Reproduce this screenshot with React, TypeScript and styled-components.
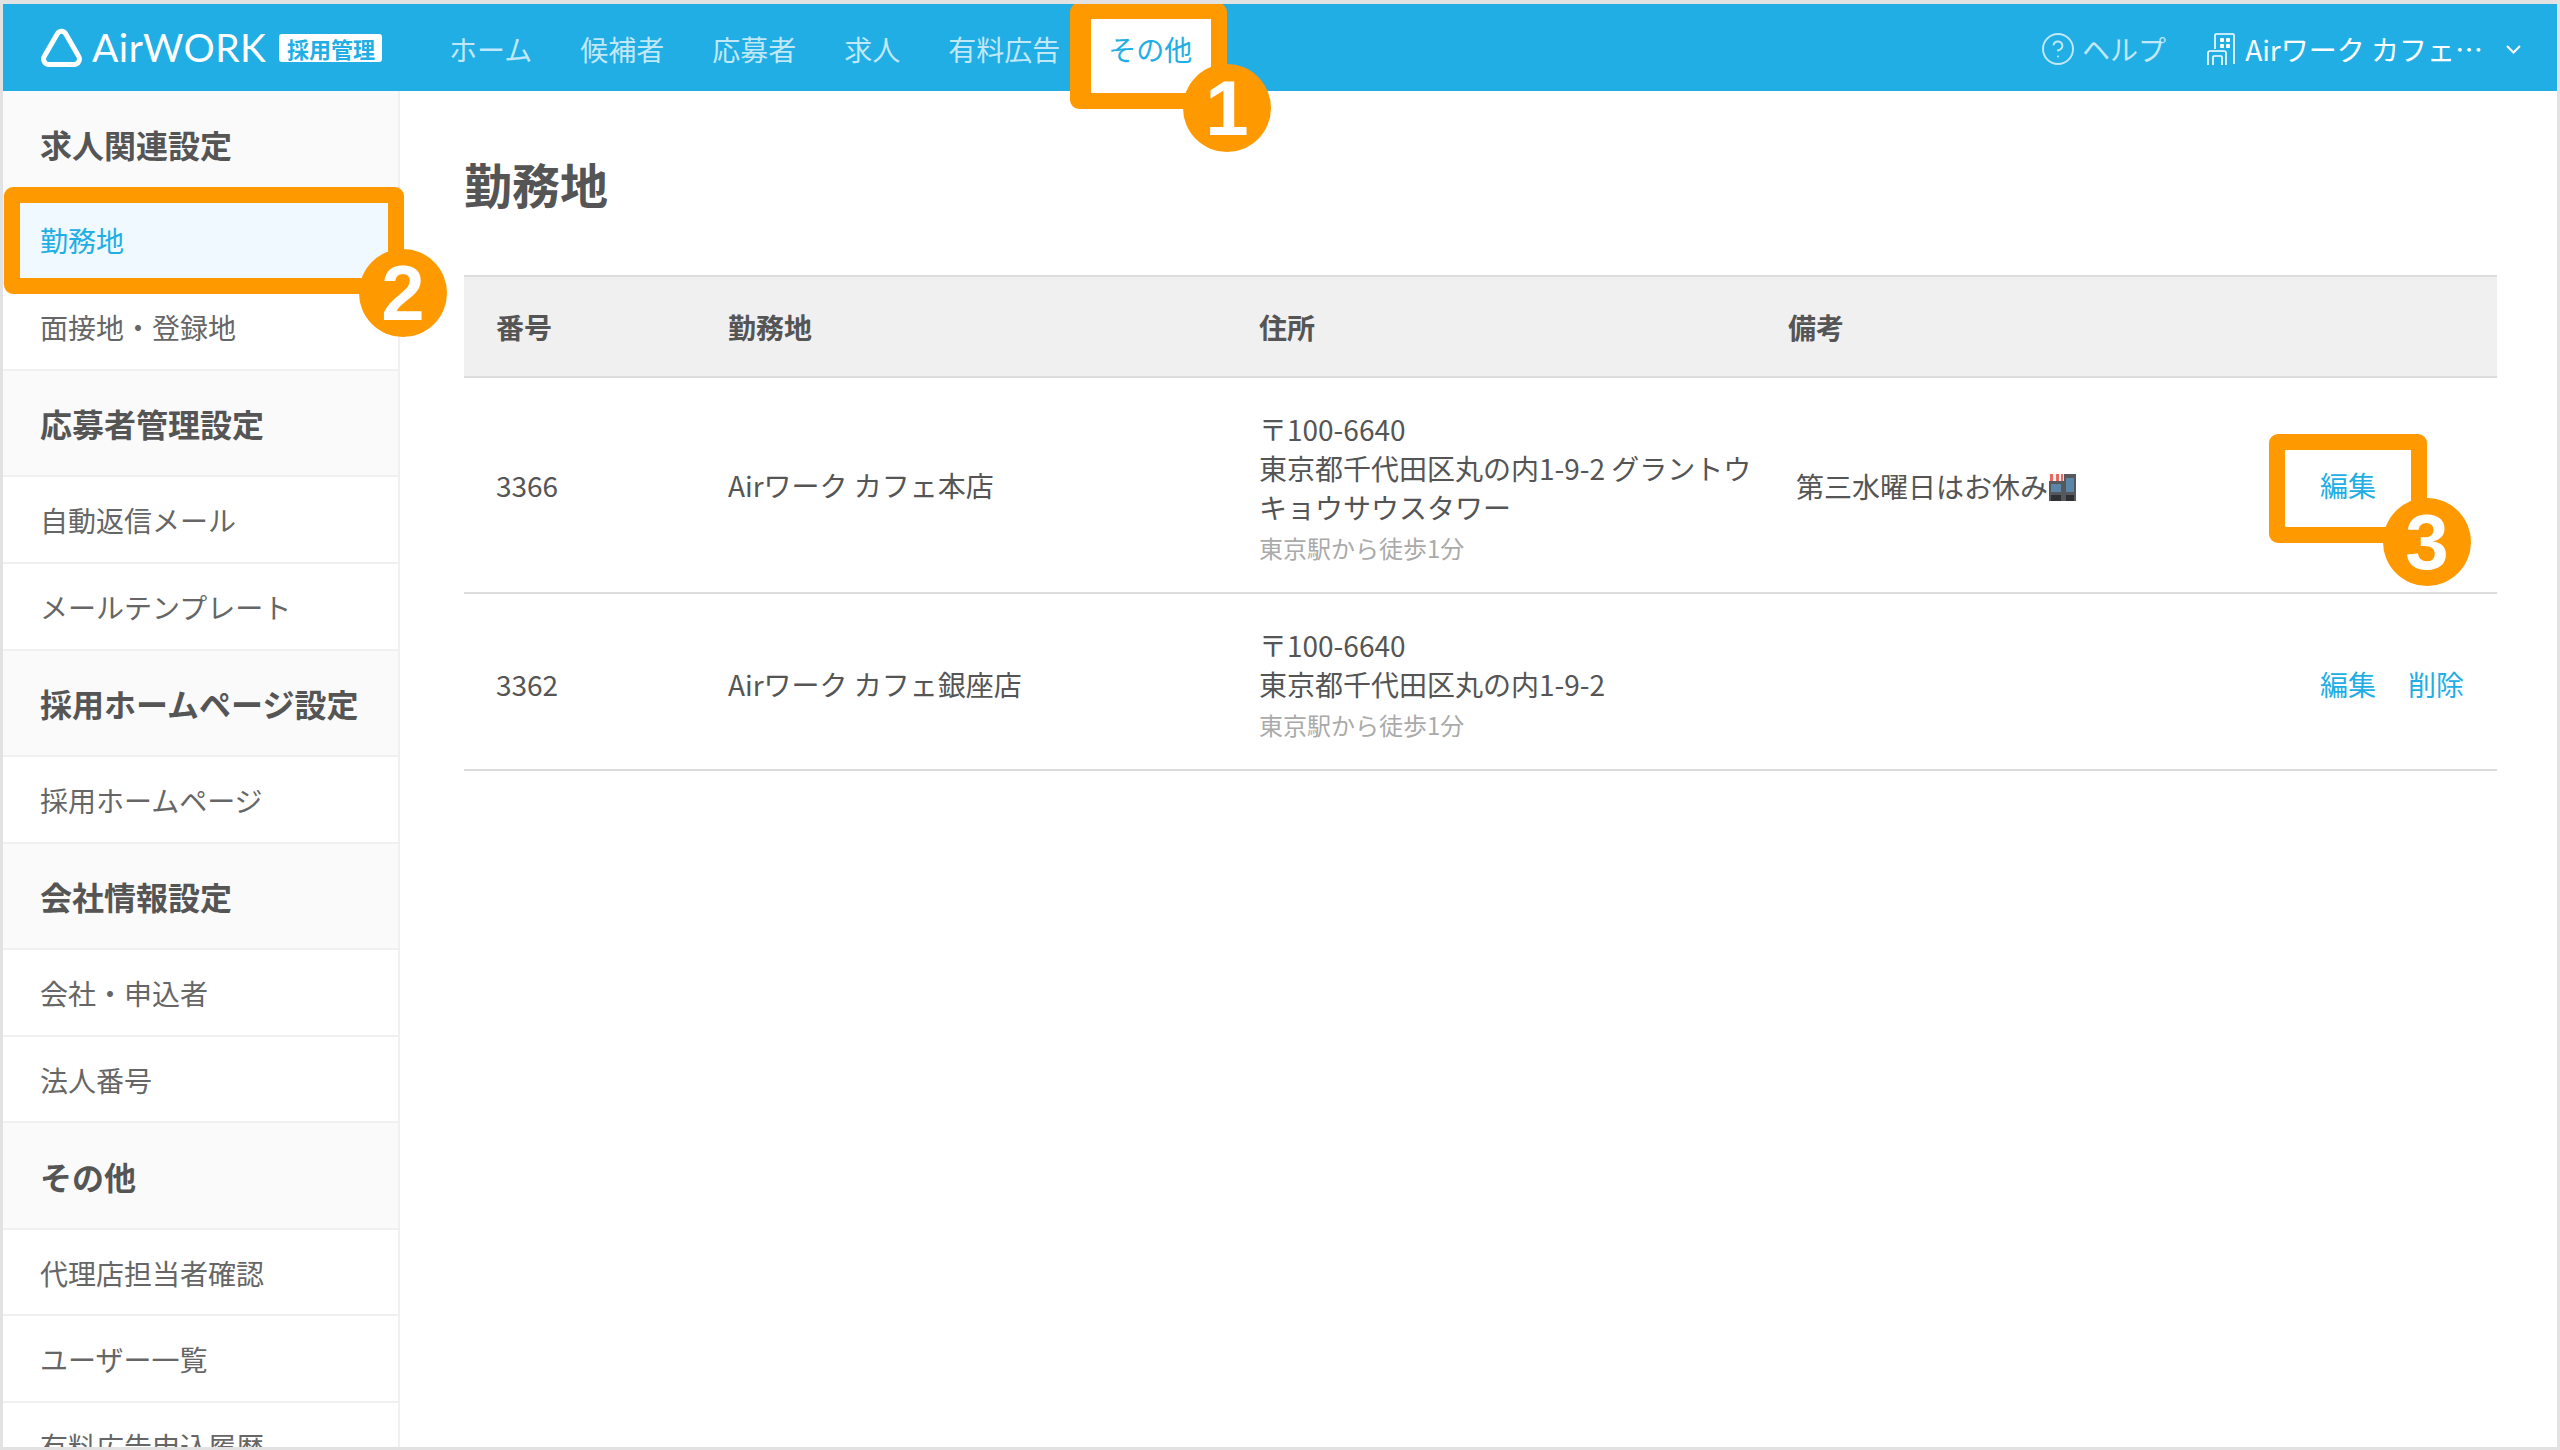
import React from "react";
import styled, { createGlobalStyle } from "styled-components";
import { CircleHelp } from "lucide-react";

const BLUE = "#21aee5";
const ORANGE = "#ff9900";

const GlobalStyle = createGlobalStyle`
  html, body {
    margin: 0;
    padding: 0;
    background: #fff;
  }
  body {
    font-family: "Noto Sans CJK JP", "Noto Sans", sans-serif;
    color: #555;
  }
`;

const Frame = styled.div`
  position: relative;
  box-sizing: border-box;
  width: 2560px;
  height: 1450px;
  display: flex;
  flex-direction: column;
  overflow: hidden;
  background: #fff;
  border-style: solid;
  border-color: #e2e2e2;
  border-width: 4px 3px 3px 3px;
`;

const Header = styled.header`
  flex: none;
  height: 87px;
  display: flex;
  align-items: stretch;
  background: ${BLUE};
  color: #fff;
  padding: 0 36px 0 37px;
`;

const Logo = styled.div`
  display: flex;
  align-items: center;
  width: 385px;
`;

const LogoName = styled.span`
  margin-left: 9px;
  font-family: "Lato", sans-serif;
  font-size: 39px;
  font-weight: 400;
  line-height: 1;
  letter-spacing: 0.5px;
`;

const LogoBadge = styled.span`
  margin-left: 13px;
  width: 103px;
  height: 28px;
  display: flex;
  align-items: center;
  justify-content: center;
  border-radius: 3px;
  background: #fff;
  color: ${BLUE};
  font-size: 22px;
  font-weight: 700;
  line-height: 1;
`;

const Nav = styled.nav`
  display: flex;
`;

const NavItem = styled.a<{ $active?: boolean }>`
  display: flex;
  align-items: center;
  padding: 3px 24px 0;
  font-size: 28px;
  color: ${(p) => (p.$active ? BLUE : "rgba(255, 255, 255, 0.72)")};
  background: ${(p) => (p.$active ? "#fff" : "transparent")};
`;

const HeaderRight = styled.div`
  margin-left: auto;
  display: flex;
  align-items: center;
  padding-top: 3px;
`;

const Help = styled.a`
  display: flex;
  align-items: center;
  gap: 6px;
  margin-right: 41px;
  font-size: 28px;
  color: rgba(255, 255, 255, 0.72);
`;

const Shop = styled.div`
  display: flex;
  align-items: center;
  font-size: 28px;
  color: #fff;
`;

const ShopName = styled.span`
  margin: 0 23px 0 10px;
`;

const Body = styled.div`
  flex: 1;
  min-height: 0;
  display: flex;
`;

const Sidebar = styled.aside`
  flex: none;
  box-sizing: border-box;
  width: 397px;
  border-right: 2px solid #f0f0f0;
  overflow: hidden;
`;

const SideHead = styled.div`
  box-sizing: border-box;
  height: 106.4px;
  display: flex;
  align-items: center;
  padding: 1px 0 0 37px;
  background: #fafafa;
  border-bottom: 2px solid #f0f0f0;
  font-size: 32px;
  font-weight: 700;
  color: #555;
`;

const SideRow = styled.a<{ $active?: boolean }>`
  box-sizing: border-box;
  height: 86.7px;
  display: flex;
  align-items: center;
  padding: 1px 0 0 37px;
  border-bottom: 2px solid #f0f0f0;
  font-size: 28px;
  color: ${(p) => (p.$active ? BLUE : "#666")};
  background: ${(p) => (p.$active ? "#f0f9ff" : "#fff")};
`;

const Main = styled.main`
  flex: 1;
  min-width: 0;
  padding: 0 60px 0 64px;
`;

const Title = styled.h1`
  margin: 0;
  height: 184px;
  box-sizing: border-box;
  padding-top: 54px;
  font-size: 48px;
  line-height: 76px;
  font-weight: 700;
  color: #555;
`;

const Table = styled.table`
  width: 2033px;
  table-layout: fixed;
  border-collapse: collapse;
  font-size: 28px;
  color: #555;
`;

const HeadRow = styled.tr`
  background: #f0f0f0;
  border-top: 2px solid #dcdcdc;
  border-bottom: 2px solid #dcdcdc;
`;

const Th = styled.th<{ $width?: number }>`
  box-sizing: border-box;
  width: ${(p) => (p.$width ? `${p.$width}px` : "auto")};
  height: 101px;
  padding: 0 32px;
  text-align: left;
  font-size: 28px;
  font-weight: 700;
`;

const Row = styled.tr`
  border-bottom: 2px solid #dcdcdc;
`;

const Td = styled.td<{ $nudge?: number }>`
  padding: ${(p) => p.$nudge ?? 0}px 32px 0;
  vertical-align: middle;
  line-height: 39px;
`;

const AddressCell = styled(Td)`
  padding: 32px 0 23px 32px;
  white-space: nowrap;
`;

const ActionCell = styled(Td)`
  padding-right: 0;
`;

const Access = styled.div`
  font-size: 24px;
  line-height: 42px;
  color: #aaa;
`;

const Note = styled.span`
  display: flex;
  align-items: center;
  margin-left: 8px;
`;

const Actions = styled.div`
  display: flex;
  gap: 32px;
`;

const ActionLink = styled.a`
  color: ${BLUE};
`;

const Callout = styled.div<{
  $x: number;
  $y: number;
  $w: number;
  $h: number;
  $left?: number;
}>`
  position: absolute;
  box-sizing: border-box;
  left: ${(p) => p.$x - 3}px;
  top: ${(p) => p.$y - 4}px;
  width: ${(p) => p.$w}px;
  height: ${(p) => p.$h}px;
  border: 16px solid ${ORANGE};
  border-left-width: ${(p) => p.$left ?? 16}px;
  border-radius: 9px;
`;

const Marker = styled.div<{ $x: number; $y: number }>`
  position: absolute;
  left: ${(p) => p.$x - 47}px;
  top: ${(p) => p.$y - 48}px;
  width: 88px;
  height: 88px;
  display: flex;
  align-items: center;
  justify-content: center;
  border-radius: 50%;
  background: ${ORANGE};
  color: #fff;
  font-family: "Liberation Sans", sans-serif;
  font-size: 78px;
  font-weight: 700;
  line-height: 1;
`;

const LogoMark = () => (
  <svg width="43" height="40" viewBox="0 0 43 40" fill="none">
    <path
      d="M17.5 5.5a4.6 4.6 0 0 1 8 0L38.5 28a5.5 5.5 0 0 1-4.8 8.5H9.3A5.5 5.5 0 0 1 4.5 28Z"
      stroke="#fff"
      strokeWidth="5"
      strokeLinejoin="round"
    />
  </svg>
);

const BuildingIcon = () => (
  <svg width="28" height="32" viewBox="0 0 28 32" fill="none" stroke="#fff" strokeWidth="1.6">
    <path d="M8 16V2a1 1 0 0 1 1-1h17a1 1 0 0 1 1 1v29" />
    <path d="M1 32V20a2 2 0 0 1 2-2h14a2 2 0 0 1 2 2v12" />
    <path d="M6 32v-8a1 1 0 0 1 1-1h7a1 1 0 0 1 1 1v8" />
    <g fill="#fff" stroke="none">
      <rect x="13" y="5" width="4" height="4" rx="1" />
      <rect x="19" y="5" width="4" height="4" rx="1" />
      <rect x="13" y="11" width="4" height="4" rx="1" />
      <rect x="19" y="11" width="4" height="4" rx="1" />
    </g>
  </svg>
);

const Chevron = () => (
  <svg width="15" height="9" viewBox="0 0 15 9" fill="none" stroke="#fff" strokeWidth="2">
    <path d="M1 1l6.5 6.5L14 1" />
  </svg>
);

// the department store emoji after the note text
const StoreEmoji = () => (
  <svg width="29" height="28" viewBox="0 0 29 28">
    <rect x="1" y="1" width="27" height="27" fill="#55585c" />
    <rect x="1" y="1" width="15" height="7" fill="#f4f4f4" />
    <rect x="2" y="1" width="3" height="7" fill="#e9685f" />
    <rect x="8" y="1" width="3" height="7" fill="#e9685f" />
    <rect x="13" y="1" width="2" height="7" fill="#e9685f" />
    <rect x="3" y="11" width="10" height="8" fill="#5c86a8" />
    <rect x="18" y="5" width="8" height="14" fill="#5c86a8" />
    <rect x="3" y="22" width="10" height="6" fill="#2e3033" />
    <rect x="18" y="22" width="8" height="6" fill="#2e3033" />
  </svg>
);

const navItems = ["ホーム", "候補者", "応募者", "求人", "有料広告"];

const sideGroups = [
  { title: "求人関連設定", items: ["勤務地", "面接地・登録地"] },
  { title: "応募者管理設定", items: ["自動返信メール", "メールテンプレート"] },
  { title: "採用ホームページ設定", items: ["採用ホームページ"] },
  { title: "会社情報設定", items: ["会社・申込者", "法人番号"] },
  { title: "その他", items: ["代理店担当者確認", "ユーザー一覧", "有料広告申込履歴"] },
];

export default function App() {
  return (
    <>
      <GlobalStyle />
      <Frame>
        <Header>
          <Logo>
            <LogoMark />
            <LogoName>AirWORK</LogoName>
            <LogoBadge>採用管理</LogoBadge>
          </Logo>
          <Nav>
            {navItems.map((item) => (
              <NavItem key={item}>{item}</NavItem>
            ))}
            <NavItem $active>その他</NavItem>
          </Nav>
          <HeaderRight>
            <Help>
              <CircleHelp size={36} strokeWidth={1.3} />
              ヘルプ
            </Help>
            <Shop>
              <BuildingIcon />
              <ShopName>Airワーク カフェ…</ShopName>
              <Chevron />
            </Shop>
          </HeaderRight>
        </Header>
        <Body>
          <Sidebar>
            {sideGroups.map((group) => (
              <React.Fragment key={group.title}>
                <SideHead>{group.title}</SideHead>
                {group.items.map((item) => (
                  <SideRow key={item} $active={item === "勤務地"}>
                    {item}
                  </SideRow>
                ))}
              </React.Fragment>
            ))}
          </Sidebar>
          <Main>
            <Title>勤務地</Title>
            <Table>
              <thead>
                <HeadRow>
                  <Th $width={232}>番号</Th>
                  <Th $width={531}>勤務地</Th>
                  <Th $width={529}>住所</Th>
                  <Th>備考</Th>
                  <Th $width={209} />
                </HeadRow>
              </thead>
              <tbody>
                <Row>
                  <Td>3366</Td>
                  <Td>Airワーク カフェ本店</Td>
                  <AddressCell>
                    〒100-6640
                    <br />
                    東京都千代田区丸の内1-9-2 グラントウ
                    <br />
                    キョウサウスタワー
                    <Access>東京駅から徒歩1分</Access>
                  </AddressCell>
                  <Td $nudge={3}>
                    <Note>
                      第三水曜日はお休み
                      <StoreEmoji />
                    </Note>
                  </Td>
                  <ActionCell>
                    <Actions>
                      <ActionLink>編集</ActionLink>
                    </Actions>
                  </ActionCell>
                </Row>
                <Row>
                  <Td $nudge={6}>3362</Td>
                  <Td $nudge={6}>Airワーク カフェ銀座店</Td>
                  <AddressCell>
                    〒100-6640
                    <br />
                    東京都千代田区丸の内1-9-2
                    <Access>東京駅から徒歩1分</Access>
                  </AddressCell>
                  <Td />
                  <ActionCell $nudge={6}>
                    <Actions>
                      <ActionLink>編集</ActionLink>
                      <ActionLink>削除</ActionLink>
                    </Actions>
                  </ActionCell>
                </Row>
              </tbody>
            </Table>
          </Main>
        </Body>
        <Callout $x={1070} $y={3} $w={157} $h={106} $left={21} />
        <Marker $x={1227} $y={108}>1</Marker>
        <Callout $x={4} $y={187} $w={400} $h={107} />
        <Marker $x={403} $y={293}>2</Marker>
        <Callout $x={2269} $y={434} $w={158} $h={109} />
        <Marker $x={2427} $y={542}>3</Marker>
      </Frame>
    </>
  );
}
